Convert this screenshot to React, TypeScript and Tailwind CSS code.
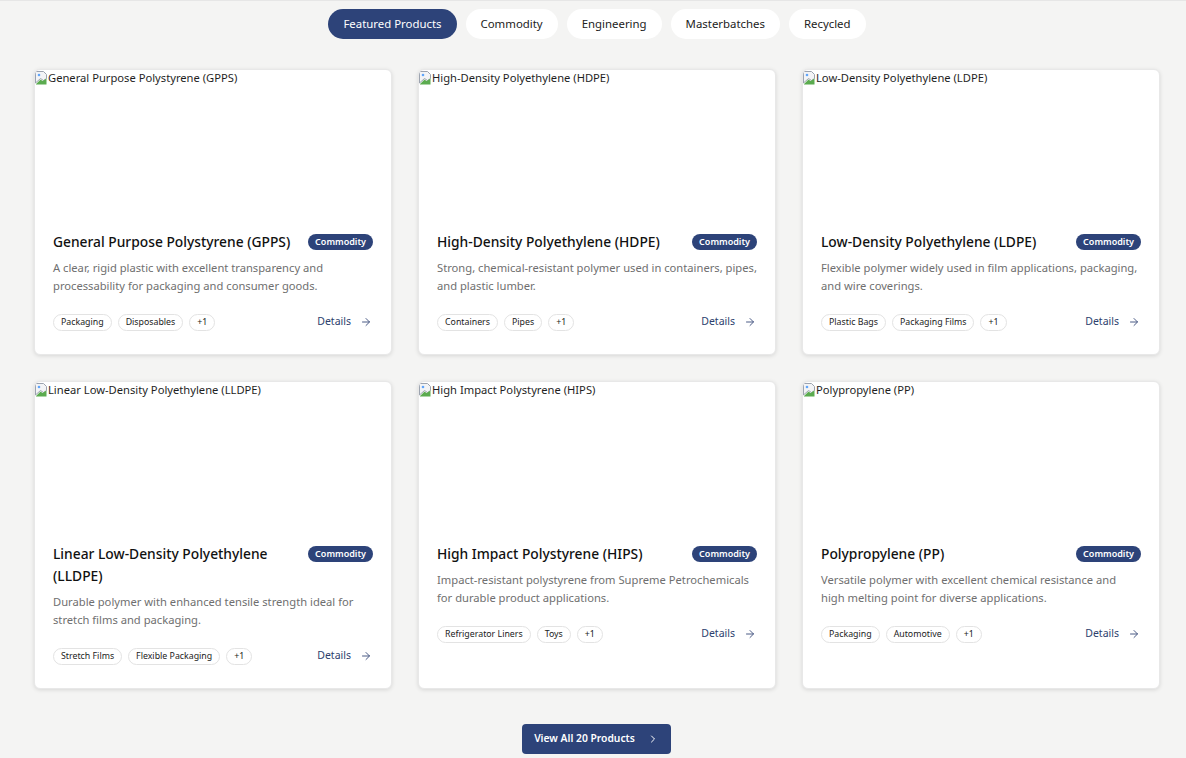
import { ArrowRight, ChevronRight } from "lucide-react";

type Product = {
  name: string;
  desc: string;
  tags: string[];
};

const PRODUCTS: Product[] = [
  {
    name: "General Purpose Polystyrene (GPPS)",
    desc: "A clear, rigid plastic with excellent transparency and processability for packaging and consumer goods.",
    tags: ["Packaging", "Disposables"],
  },
  {
    name: "High-Density Polyethylene (HDPE)",
    desc: "Strong, chemical-resistant polymer used in containers, pipes, and plastic lumber.",
    tags: ["Containers", "Pipes"],
  },
  {
    name: "Low-Density Polyethylene (LDPE)",
    desc: "Flexible polymer widely used in film applications, packaging, and wire coverings.",
    tags: ["Plastic Bags", "Packaging Films"],
  },
  {
    name: "Linear Low-Density Polyethylene (LLDPE)",
    desc: "Durable polymer with enhanced tensile strength ideal for stretch films and packaging.",
    tags: ["Stretch Films", "Flexible Packaging"],
  },
  {
    name: "High Impact Polystyrene (HIPS)",
    desc: "Impact-resistant polystyrene from Supreme Petrochemicals for durable product applications.",
    tags: ["Refrigerator Liners", "Toys"],
  },
  {
    name: "Polypropylene (PP)",
    desc: "Versatile polymer with excellent chemical resistance and high melting point for diverse applications.",
    tags: ["Packaging", "Automotive"],
  },
];

const TABS = ["Featured Products", "Commodity", "Engineering", "Masterbatches", "Recycled"];

// little broken-image glyph, like the browser draws for a missing src
function BrokenImage() {
  return (
    <svg width="13" height="16" viewBox="0 0 13 16" className="shrink-0">
      <path d="M0.5 1.5h8l3 3v4l-3 2-3-2-5 4.5z" fill="#f3f4f6" stroke="#9ca3af" strokeWidth="1" />
      <path d="M1 14l4.5-4.5 2 1.5 4-2.5V14.5H1z" fill="#5bab4f" />
      <circle cx="4" cy="5" r="1.3" fill="#60a5fa" />
    </svg>
  );
}

function ProductCard({ p }: { p: Product }) {
  return (
    <div className="bg-white rounded-md border border-[#e8e8e8] shadow-[0_1px_4px_rgba(0,0,0,0.12)] overflow-hidden flex flex-col">
      {/* Image (broken) */}
      <div className="h-[143px] shrink-0">
        <div className="flex items-start text-[11.2px] leading-[16px] text-[#1f1f1f]">
          <BrokenImage />
          <span>{p.name}</span>
        </div>
      </div>

      <div className="px-[18px] pt-[18px] pb-[20px]">
        <div className="flex items-start justify-between gap-2">
          <h3 className="text-[13.8px] leading-[22px] font-medium text-[#111]">{p.name}</h3>
          <span className="mt-[3px] shrink-0 rounded-full bg-[#2d4379] text-white text-[9px] font-semibold px-[7px] h-[16px] leading-[16px]">
            Commodity
          </span>
        </div>
        <p className="mt-[6px] text-[11.2px] leading-[18px] text-[#6f6f6f]">{p.desc}</p>
        <div className="mt-[15px] flex items-center justify-between h-6">
          <div className="flex items-center gap-[6px]">
            {[...p.tags, "+1"].map((t) => (
              <span
                key={t}
                className="h-[17px] leading-[15px] px-[7px] rounded-full border border-[#e3e3e3] bg-white text-[8.8px] text-[#222]"
              >
                {t}
              </span>
            ))}
          </div>
          <span className="flex items-center gap-[9px] pr-[1px] text-[10.5px] text-[#2d3f6e]">
            Details
            <ArrowRight className="w-3 h-3 text-[#4a5a85]" strokeWidth={2} />
          </span>
        </div>
      </div>
    </div>
  );
}

export default function App() {
  return (
    <div
      className="min-h-[758px] bg-[#f4f4f3] border-t border-[#e6e6e6]"
      style={{ fontFamily: '"Noto Sans", "Open Sans", sans-serif' }}
    >
      {/* Tabs */}
      <div className="flex justify-center gap-[9px] pt-[8px] pl-[8px]">
        {TABS.map((t, i) => (
          <button
            key={t}
            className={`h-[30px] px-[15px] rounded-full text-[11.4px] ${
              i === 0 ? "bg-[#2d4379] text-white" : "bg-white text-[#222]"
            }`}
          >
            {t}
          </button>
        ))}
      </div>

      {/* Grid */}
      <div className="grid grid-cols-3 gap-[26px] pl-[34px] pr-[26px] mt-[30px]">
        {PRODUCTS.map((p) => (
          <ProductCard key={p.name} p={p} />
        ))}
      </div>

      <div className="flex justify-center mt-[35px] pl-[7px] pb-1">
        <button className="h-[30px] px-[12px] rounded bg-[#2d4379] text-white text-[10.3px] font-semibold flex items-center gap-[12px]">
          View All 20 Products
          <ChevronRight className="w-3 h-3" strokeWidth={2} />
        </button>
      </div>
    </div>
  );
}
